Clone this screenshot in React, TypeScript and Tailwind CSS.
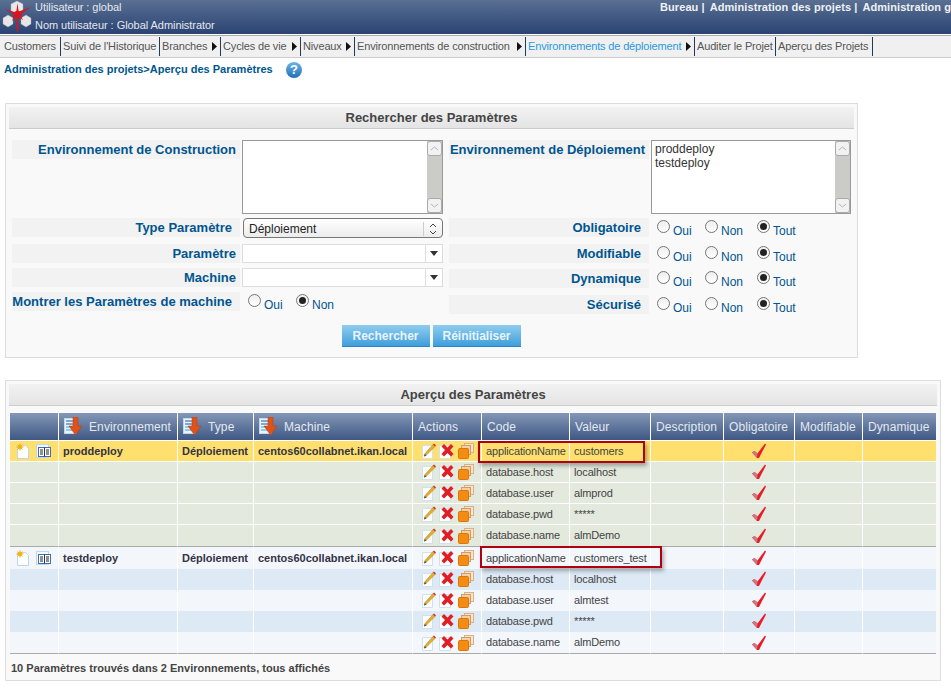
import React from "react";

const Logo = () => (
  <svg width="34" height="34" viewBox="1 0 34 34" className="shrink-0">
    <g stroke="#a8a8a8" strokeWidth="0.4">
      <path d="M17 1l6 3v7l-6 3-6-3V4z" fill="#e8e8e8" />
      <path d="M8 15l5 3v6l-5 3-5-3v-6z" fill="#e6e6e6" />
      <path d="M26 15l5 3v6l-5 3-5-3v-6z" fill="#e6e6e6" />
    </g>
    <g fill="#d8141c">
      <path d="M17.500 3l1.200 9-.6 4 .4 13-1 4-1-4 .4-13-.6-4z" />
      <path d="M4 9l12 3.500L31 7 20 14.500l3 5.500-5.500-3.500L12 21l2.500-6.500z" />
      <path d="M13 12.500l4.500-2 4.500 2-1 5.500h-7z" />
    </g>
  </svg>
);

const SortIcon = () => (
  <svg width="19" height="19" viewBox="0 0 19 19" className="shrink-0">
    <rect x="0.5" y="1.5" width="12" height="15" fill="#eaf3fb" stroke="#c4d8ea" />
    <path d="M2 4h9M2 7h9" stroke="#5c8fc4" strokeWidth="1.3" />
    <path d="M2 10h9M2 13h9" stroke="#6cc0ee" strokeWidth="1.6" />
    <path d="M9 0h5v9h4l-6.500 9L5 9h4z" fill="#e0521a" stroke="#b83c10" strokeWidth="0.5" />
  </svg>
);

const NewDoc = () => (
  <svg width="14" height="16" viewBox="0 0 14 16">
    <path d="M1.500 2.500h8l3 3v10h-11z" fill="#fff" stroke="#bcd6ea" />
    <circle cx="4" cy="4" r="2.400" fill="#f6c814" />
    <path d="M4 .3v7.400M.3 4h7.400M1.500 1.500l5 5M6.500 1.500l-5 5" stroke="#f2a90c" strokeWidth="0.8" />
  </svg>
);

const BookIcon = () => (
  <svg width="15" height="15" viewBox="0 0 15 15">
    <rect x="0.500" y="0.500" width="12" height="13" fill="#f3f8fd" stroke="#bcd6ea" />
    <rect x="2.500" y="3.500" width="12" height="9" fill="#fff" stroke="#3f6fb0" />
    <path d="M8.500 3.500v9" stroke="#1f3558" />
    <path d="M4 6h3M4 8h3M4 10h3M10 6h3M10 8h3M10 10h3" stroke="#222" />
  </svg>
);

const Pencil = () => (
  <svg width="15" height="16" viewBox="0 0 15 16" className="ml-[1px] mr-[-1px] shrink-0">
    <path d="M.500 2.500h10v13H.500z" fill="#fff" stroke="#cfe0ee" />
    <path d="M2 13l1-2.500L11 1.500l2 2L4.500 12z" fill="#e9ad2a" stroke="#8a6a1c" strokeWidth="0.4" />
    <path d="M11 1.500l1-1 2 2-1 1z" fill="#cc2a20" />
    <path d="M2 13.500l.8-2.500 1.800 1.400z" fill="#5a4a36" />
  </svg>
);

const Cross = () => (
  <svg width="16" height="16" viewBox="0 0 16 16" className="shrink-0">
    <path d="M.500 2.500h11v13H.500z" fill="#fff" stroke="#cfe0ee" />
    <path d="M2.500 3.500l2.500-2.500 3.500 3.500 3.500-3.500 2.500 2.500-3.500 3.500 3.500 4-2.500 2.500-3.500-3.500-3.500 3.500-2.500-2.500 3.500-4z" fill="#e01f25" />
  </svg>
);

const Copy = () => (
  <svg width="16" height="16" viewBox="0 0 16 16" className="shrink-0">
    <rect x="6.500" y="0.500" width="9" height="9" fill="#fbe3cc" stroke="#d8b08a" />
    <rect x="3.500" y="2.500" width="9" height="9" fill="#f9cfa6" stroke="#d09a6a" />
    <rect x="0.500" y="5.500" width="10" height="10" rx="1" fill="#f48c14" stroke="#d87808" />
  </svg>
);

const Check = () => (
  <svg width="16" height="16" viewBox="0 0 16 16">
    <path d="M1 9.500l2.500-1.500 3 2.500L14 .5l1 1-7 13.500h-2z" fill="#ea1c28" />
    <path d="M1 9.500l2.500-1.500 3 2.500-.5 4z" fill="#c97a80" />
  </svg>
);

const Radio = ({ on }: { on?: boolean }) => (
  <span className="flex h-[13px] w-[13px] shrink-0 items-center justify-center rounded-full border border-[#767676] bg-gradient-to-b from-[#eeeeee] to-white">
    {on && <span className="h-[7px] w-[7px] rounded-full bg-[#222222]" />}
  </span>
);

const Opt = ({ label, on, w }: { label: string; on?: boolean; w: string }) => (
  <span className={`flex items-start gap-[3px] ${w}`}>
    <Radio on={on} />
    <span className="mt-[4px] text-[12px] leading-[14px] text-[#00558f]">{label}</span>
  </span>
);

const Triple = () => (
  <div className="mt-[2px] flex h-[17px] pl-[8px]">
    <Opt label="Oui" w="w-[48px]" />
    <Opt label="Non" w="w-[52px]" />
    <Opt label="Tout" on w="w-[50px]" />
  </div>
);

const Label = ({ children, w, pr }: { children: React.ReactNode; w: string; pr: string }) => (
  <div className={`flex h-[19px] shrink-0 items-start justify-end whitespace-nowrap bg-[#f2f2f2] pt-[2px] text-[13px] font-bold leading-[16px] text-[#00558f] ${w} ${pr}`}>
    {children}
  </div>
);

const ListBox = ({ items, w }: { items: string[]; w: string }) => (
  <div className={`flex h-[74px] border border-[#999999] bg-white ${w}`}>
    <div className="flex-1 pl-[3px] pt-[1px] text-[12px] leading-[14px] text-[#333333]">
      {items.map((i) => (
        <div key={i}>{i}</div>
      ))}
    </div>
    <div className="flex w-[15px] flex-col bg-[#cbcbc7]">
      <div className="flex h-[15px] items-center justify-center rounded-[3px] border border-[#aaaaaa] bg-[#f2f2f2]">
        <svg width="9" height="5" viewBox="0 0 9 5"><path d="M1 4l3.500-3L8 4" fill="none" stroke="#b5b5b5" /></svg>
      </div>
      <div className="flex-1" />
      <div className="flex h-[15px] items-center justify-center rounded-[3px] border border-[#aaaaaa] bg-[#f2f2f2]">
        <svg width="9" height="5" viewBox="0 0 9 5"><path d="M1 1l3.500 3L8 1" fill="none" stroke="#b5b5b5" /></svg>
      </div>
    </div>
  </div>
);

const Combo = () => (
  <div className="flex h-[19px] w-[201px] border border-[#dddddd] bg-white">
    <div className="flex-1" />
    <div className="flex w-[17px] items-center justify-center border-l border-[#dddddd]">
      <svg width="8" height="5" viewBox="0 0 8 5"><path d="M0 0h8L4 5z" fill="#333333" /></svg>
    </div>
  </div>
);

const PanelTitle = ({ children, cls }: { children: React.ReactNode; cls: string }) => (
  <div className={`flex items-center justify-center border-b border-[#cccccc] bg-gradient-to-b from-[#f2f2f2] to-[#e4e4e4] text-[13px] font-bold text-[#444444] ${cls}`}>
    {children}
  </div>
);

const columns = [
  { w: "w-[49px]", label: "" },
  { w: "w-[119px]", label: "Environnement", sort: true },
  { w: "w-[76px]", label: "Type", sort: true },
  { w: "w-[159px]", label: "Machine", sort: true },
  { w: "w-[69px]", label: "Actions" },
  { w: "w-[88px]", label: "Code" },
  { w: "w-[81px]", label: "Valeur" },
  { w: "w-[73px]", label: "Description" },
  { w: "w-[71px]", label: "Obligatoire" },
  { w: "w-[68px]", label: "Modifiable" },
  { w: "w-[73px]", label: "Dynamique" },
];

type Row = { code: string; value: string; env?: string; bg: string; border: string; h: string; cls?: string };

const rows: Row[] = [
  { env: "proddeploy", code: "applicationName", value: "customers", bg: "bg-[#ffe06e]", border: "border-b-white", h: "h-[21px]" },
  { code: "database.host", value: "localhost", bg: "bg-[#e3eadd]", border: "border-b-white", h: "h-[21px]" },
  { code: "database.user", value: "almprod", bg: "bg-[#e3eadd]", border: "border-b-white", h: "h-[21px]" },
  { code: "database.pwd", value: "*****", bg: "bg-[#e3eadd]", border: "border-b-white", h: "h-[21px]" },
  { code: "database.name", value: "almDemo", bg: "bg-[#e3eadd]", border: "border-b-[#aaaaaa]", h: "h-[22px]" },
  { env: "testdeploy", code: "applicationName", value: "customers_test", bg: "bg-[#f3f7fc]", border: "border-b-[#f3f7fc]", h: "h-[22px]", cls: "[&>td]:pt-[1px]" },
  { code: "database.host", value: "localhost", bg: "bg-[#dde9f5]", border: "border-b-[#dde9f5]", h: "h-[21px]" },
  { code: "database.user", value: "almtest", bg: "bg-[#f3f7fc]", border: "border-b-[#f3f7fc]", h: "h-[21px]" },
  { code: "database.pwd", value: "*****", bg: "bg-[#dde9f5]", border: "border-b-[#dde9f5]", h: "h-[21px]" },
  { code: "database.name", value: "almDemo", bg: "bg-[#f3f7fc]", border: "border-b-[#aaaaaa]", h: "h-[22px]" },
];

const NavItem = ({ label, arrow, active, w }: { label: string; arrow?: boolean; active?: boolean; w: string }) => (
  <div className={`flex h-[19px] items-center justify-between whitespace-nowrap border-r border-[#1f3a5a] pl-[2px] tracking-[-0.15px] ${w} ${active ? "text-[#2b99dc]" : "text-[#555555]"}`}>
    <span>{label}</span>
    {arrow && (
      <svg width="5" height="9" viewBox="0 0 5 9" className="mr-[3px] shrink-0"><path d="M0 0l5 4.500L0 9z" fill="#111111" /></svg>
    )}
  </div>
);

export default function App() {
  return (
    <div className="h-[691px] w-[951px] overflow-hidden bg-white font-['Liberation_Sans',Arial,sans-serif] text-[11px]">
      <header className="flex h-[34px] bg-gradient-to-b from-[#5a7092] to-[#2a4373] text-white">
        <div className="flex w-[660px] shrink-0 pl-[1px]">
          <Logo />
          <div className="text-[11px] leading-[18px] tracking-[-0.05px] text-[#e4e8ee]">
            <div className="-mt-[2px] h-[17px]">Utilisateur : global</div>
            <div className="mt-[1px]">Nom utilisateur : Global Administrator</div>
          </div>
        </div>
        <div className="-mt-[2px] flex gap-[4px] whitespace-nowrap text-[11px] font-bold leading-[18px] tracking-[0.08px] text-[#eef1f5]">
          <span>Bureau |</span>
          <span className="ml-[1px]">Administration des projets |</span>
          <span className="ml-[1px]">Administration générale</span>
        </div>
      </header>
      <nav className="mt-[1px] flex h-[23px] items-center border-b border-t border-[#aaaaaa] border-b-[#cccccc] bg-[#f0f0f0] pl-[2px]">
        <NavItem label="Customers" w="w-[59px]" />
        <NavItem label="Suivi de l'Historique" w="w-[99px]" />
        <NavItem label="Branches" arrow w="w-[61px]" />
        <NavItem label="Cycles de vie" arrow w="w-[80px]" />
        <NavItem label="Niveaux" arrow w="w-[54px]" />
        <NavItem label="Environnements de construction" arrow w="w-[171px]" />
        <NavItem label="Environnements de déploiement" arrow active w="w-[169px]" />
        <NavItem label="Auditer le Projet" w="w-[81px]" />
        <NavItem label="Aperçu des Projets" w="w-[97px]" />
      </nav>
      <div className="flex h-[24px] items-center pb-[1px] pl-[4px] font-bold text-[#00558f]">
        <span className="w-[282px]">Administration des projets&gt;Aperçu des Paramètres</span>
        <span className="flex h-[16px] w-[16px] items-center justify-center rounded-full bg-gradient-to-b from-[#6fb4e6] to-[#1d6fb8] text-[13px] font-bold text-white">?</span>
      </div>

      <section className="ml-[5px] mt-[21px] h-[255px] w-[853px] border border-[#dddddd] bg-[#f9f9f9] px-[3px] pt-[3px]">
        <PanelTitle cls="h-[22px] w-[845px]">Rechercher des Paramètres</PanelTitle>
        <div className="mt-[11px] flex pl-[3px]">
          <div className="flex w-[437px] flex-col">
            <div className="flex gap-[2px]">
              <Label w="w-[228px]" pr="pr-[4px]">Environnement de Construction</Label>
              <ListBox items={[]} w="w-[201px]" />
            </div>
            <div className="mt-[4px] flex gap-[3px]">
              <Label w="w-[228px]" pr="pr-[8px]">Type Paramètre</Label>
              <div className="flex h-[20px] w-[200px] items-center rounded-[4px] border border-[#777777] bg-gradient-to-b from-white to-[#ececec] pl-[5px] pt-[1px] text-[12px] text-[#222222]">
                <span className="flex-1">Déploiement</span>
                <span className="flex h-[14px] w-[19px] items-center justify-center border-l border-[#cccccc]">
                  <svg width="8" height="12" viewBox="0 0 8 12"><path d="M1 4l3-3 3 3M1 8l3 3 3-3" fill="none" stroke="#444444" /></svg>
                </span>
              </div>
            </div>
            <div className="mt-[6px] flex gap-[2px]">
              <Label w="w-[228px]" pr="pr-[4px]">Paramètre</Label>
              <Combo />
            </div>
            <div className="mt-[5px] flex gap-[2px]">
              <Label w="w-[228px]" pr="pr-[4px]">Machine</Label>
              <Combo />
            </div>
            <div className="mt-[5px] flex">
              <Label w="w-[228px]" pr="pr-[8px]">Montrer les Paramètres de machine</Label>
              <div className="mt-[2px] flex h-[17px] pl-[8px]">
                <Opt label="Oui" w="w-[48px]" />
                <Opt label="Non" on w="w-[52px]" />
              </div>
            </div>
          </div>
          <div className="flex flex-col">
            <div className="flex gap-[2px]">
              <Label w="w-[200px]" pr="pr-[4px]">Environnement de Déploiement</Label>
              <ListBox items={["proddeploy", "testdeploy"]} w="w-[200px]" />
            </div>
            <div className="mt-[4px] flex">
              <Label w="w-[200px]" pr="pr-[8px]">Obligatoire</Label>
              <Triple />
            </div>
            <div className="mt-[7px] flex">
              <Label w="w-[200px]" pr="pr-[8px]">Modifiable</Label>
              <Triple />
            </div>
            <div className="mt-[6px] flex">
              <Label w="w-[200px]" pr="pr-[8px]">Dynamique</Label>
              <Triple />
            </div>
            <div className="mt-[7px] flex">
              <Label w="w-[200px]" pr="pr-[8px]">Sécurisé</Label>
              <Triple />
            </div>
          </div>
        </div>
        <div className="mt-[11px] flex justify-center gap-[3px] pr-[1px]">
          {["Rechercher", "Réinitialiser"].map((t) => (
            <div key={t} className="flex h-[22px] w-[88px] items-center justify-center border-b border-[#2a86c4] bg-gradient-to-b from-[#8fcdee] to-[#3d9edb] pt-[1px] text-[12px] font-bold text-[#e8f4fb]">
              {t}
            </div>
          ))}
        </div>
      </section>

      <section className="relative ml-[5px] mt-[22px] h-[301px] w-[936px] border border-[#dddddd] bg-[#f9f9f9] px-[3px] pt-[3px]">
        <PanelTitle cls="h-[22px] w-[928px]">Aperçu des Paramètres</PanelTitle>
        <table className="ml-[1px] mt-[7px] w-[926px] table-fixed border-separate border-spacing-0 text-[11px] text-[#444444]">
          <colgroup>
            {columns.map((c, i) => (
              <col key={i} className={c.w} />
            ))}
          </colgroup>
          <thead>
            <tr>
              {columns.map((c, i) => (
                <th
                  key={i}
                  className="h-[28px] border-b border-r border-white bg-gradient-to-b from-[#8497b6] to-[#3f5884] pl-[5px] text-left text-[12px] font-normal tracking-[0.1px] text-[#e4e9f0] last:border-r-0"
                >
                  <span className="flex items-center gap-[6px] whitespace-nowrap">
                    {c.sort && <SortIcon />}
                    {c.label}
                  </span>
                </th>
              ))}
            </tr>
          </thead>
          <tbody>
            {rows.map((r, i) => {
              const cell = `border-b border-r border-r-white ${r.border}`;
              return (
                <tr key={i} className={`${r.bg} ${r.cls ?? ""}`}>
                  <td className={`${cell} ${r.h} pl-[6px]`}>
                    {r.env && (
                      <span className="flex items-center gap-[6px]">
                        <NewDoc />
                        <BookIcon />
                      </span>
                    )}
                  </td>
                  <td className={`${cell} pl-[4px] font-bold text-[#333344]`}>{r.env}</td>
                  <td className={`${cell} pl-[4px] font-bold text-[#333344]`}>{r.env && "Déploiement"}</td>
                  <td className={`${cell} whitespace-nowrap pl-[4px] font-bold text-[#333344]`}>{r.env && "centos60collabnet.ikan.local"}</td>
                  <td className={`${cell} pl-[8px]`}>
                    <span className="flex items-center gap-[3px]">
                      <Pencil />
                      <Cross />
                      <Copy />
                    </span>
                  </td>
                  <td className={`${cell} pl-[4px] tracking-[-0.14px]`}>{r.code}</td>
                  <td className={`${cell} pl-[4px] tracking-[-0.14px]`}>{r.value}</td>
                  <td className={cell} />
                  <td className={cell}>
                    <span className="flex justify-center">
                      <Check />
                    </span>
                  </td>
                  <td className={cell} />
                  <td className={`border-b ${r.border}`} />
                </tr>
              );
            })}
          </tbody>
        </table>
        <div className="ml-[2px] mt-[6px] font-bold text-[#444444]">10 Paramètres trouvés dans 2 Environnements, tous affichés</div>
        <div className="absolute left-[472px] top-[60px] h-[22px] w-[167px] border-2 border-[#b00010] shadow-[2px_3px_4px_rgba(0,0,0,0.3)]" />
        <div className="absolute left-[474px] top-[165px] h-[22px] w-[182px] border-2 border-[#b00010] shadow-[2px_3px_4px_rgba(0,0,0,0.3)]" />
      </section>
    </div>
  );
}
